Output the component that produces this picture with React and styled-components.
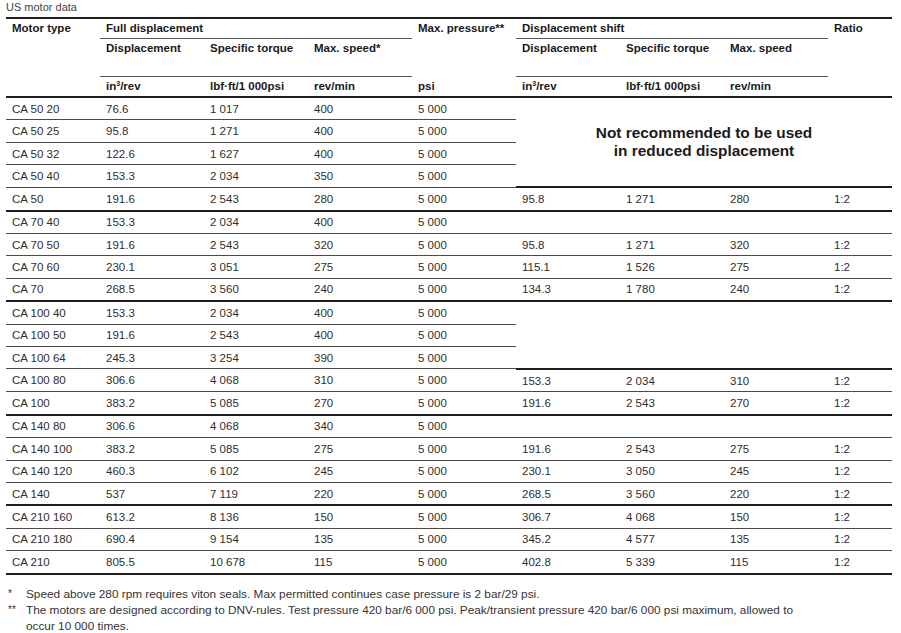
import styled, { createGlobalStyle } from "styled-components";

const GlobalStyle = createGlobalStyle`
  html, body {
    margin: 0;
    padding: 0;
    background: #fff;
  }
  body {
    font-family: "Liberation Sans", Arial, sans-serif;
    color: #2a2a2a;
  }
`;

const Page = styled.div`
  width: 901px;
  height: 633px;
  padding: 0 0 0 6px;
  box-sizing: border-box;
  overflow: hidden;
`;

const Title = styled.div`
  font-size: 11px;
  line-height: 14px;
  color: #444;
  margin-bottom: 3px;
`;

const Table = styled.table`
  width: 886px;
  border-collapse: collapse;
  table-layout: fixed;
  border-top: 2px solid #1e1e1e;
  border-bottom: 2px solid #1e1e1e;
`;

const HeadCell = styled.th`
  text-align: left;
  vertical-align: ${({ $mid }) => ($mid ? "middle" : "top")};
  padding: ${({ $mid }) => ($mid ? "0 6px" : "2px 6px 0")};
  height: ${({ $h }) => $h}px;
  box-sizing: border-box;
  font-size: 11.5px;
  line-height: 14px;
  font-weight: 700;
  color: #1a1a1a;
  white-space: nowrap;
  border-bottom: ${({ $line }) =>
    $line === "thick"
      ? "2px solid #1e1e1e"
      : $line === "thin"
      ? "1px solid #555"
      : "none"};

  sup {
    font-size: 7px;
    line-height: 0;
    vertical-align: 4px;
  }
`;

const Cell = styled.td`
  padding: 0 6px;
  height: 21.42px;
  font-size: 11.5px;
  line-height: 14px;
  color: #2e2e2e;
  white-space: nowrap;
  vertical-align: middle;
  border-bottom: ${({ $end }) =>
    $end ? "2px solid #1e1e1e" : "1px solid #4a4a4a"};
`;

const NoteCell = styled(Cell)`
  text-align: center;
  font-size: 15.4px;
  line-height: 18px;
  font-weight: 700;
  color: #1a1a1a;
  white-space: normal;
`;

const Footnotes = styled.div`
  margin-top: 11px;
  display: grid;
  grid-template-columns: 18px 775px;
  padding-left: 2px;
  font-size: 11.8px;
  line-height: 16px;
  color: #333;
`;

const Mark = styled.span`
  font-size: 10px;
`;

const rows = [
  ["CA 50 20", "76.6", "1 017", "400", "note"],
  ["CA 50 25", "95.8", "1 271", "400", "skip"],
  ["CA 50 32", "122.6", "1 627", "400", "skip"],
  ["CA 50 40", "153.3", "2 034", "350", "skip"],
  ["CA 50", "191.6", "2 543", "280", ["95.8", "1 271", "280", "1:2"], true],
  ["CA 70 40", "153.3", "2 034", "400", "blank"],
  ["CA 70 50", "191.6", "2 543", "320", ["95.8", "1 271", "320", "1:2"]],
  ["CA 70 60", "230.1", "3 051", "275", ["115.1", "1 526", "275", "1:2"]],
  ["CA 70", "268.5", "3 560", "240", ["134.3", "1 780", "240", "1:2"], true],
  ["CA 100 40", "153.3", "2 034", "400", "gap"],
  ["CA 100 50", "191.6", "2 543", "400", "skip"],
  ["CA 100 64", "245.3", "3 254", "390", "skip"],
  ["CA 100 80", "306.6", "4 068", "310", ["153.3", "2 034", "310", "1:2"]],
  ["CA 100", "383.2", "5 085", "270", ["191.6", "2 543", "270", "1:2"], true],
  ["CA 140 80", "306.6", "4 068", "340", "blank"],
  ["CA 140 100", "383.2", "5 085", "275", ["191.6", "2 543", "275", "1:2"]],
  ["CA 140 120", "460.3", "6 102", "245", ["230.1", "3 050", "245", "1:2"]],
  ["CA 140", "537", "7 119", "220", ["268.5", "3 560", "220", "1:2"], true],
  ["CA 210 160", "613.2", "8 136", "150", ["306.7", "4 068", "150", "1:2"]],
  ["CA 210 180", "690.4", "9 154", "135", ["345.2", "4 577", "135", "1:2"]],
  ["CA 210", "805.5", "10 678", "115", ["402.8", "5 339", "115", "1:2"], true],
];

function ShiftCells({ shift, end }) {
  if (shift === "skip") return null;
  if (shift === "note")
    return (
      <NoteCell colSpan={4} rowSpan={4} $end>
        Not recommended to be used
        <br />
        in reduced displacement
      </NoteCell>
    );
  if (shift === "gap") return <Cell colSpan={4} rowSpan={3} $end />;
  if (shift === "blank")
    return [0, 1, 2, 3].map((i) => <Cell key={i} $end={end} />);
  return shift.map((v, i) => (
    <Cell key={i} $end={end}>
      {v}
    </Cell>
  ));
}

export default function App() {
  return (
    <>
      <GlobalStyle />
      <Page>
        <Title>US motor data</Title>
        <Table>
          <colgroup>
            <col style={{ width: 94 }} />
            <col style={{ width: 104 }} />
            <col style={{ width: 104 }} />
            <col style={{ width: 104 }} />
            <col style={{ width: 104 }} />
            <col style={{ width: 104 }} />
            <col style={{ width: 104 }} />
            <col style={{ width: 104 }} />
            <col style={{ width: 64 }} />
          </colgroup>
          <thead>
            <tr>
              <HeadCell rowSpan={3} $line="thick">
                Motor type
              </HeadCell>
              <HeadCell colSpan={3} $h={20} $line="thin">
                Full displacement
              </HeadCell>
              <HeadCell rowSpan={2}>Max. pressure**</HeadCell>
              <HeadCell colSpan={3} $h={20} $line="thin">
                Displacement shift
              </HeadCell>
              <HeadCell rowSpan={3} $line="thick">
                Ratio
              </HeadCell>
            </tr>
            <tr>
              <HeadCell $h={38} $line="thin">Displacement</HeadCell>
              <HeadCell $h={38} $line="thin">Specific torque</HeadCell>
              <HeadCell $h={38} $line="thin">Max. speed*</HeadCell>
              <HeadCell $h={38} $line="thin">Displacement</HeadCell>
              <HeadCell $h={38} $line="thin">Specific torque</HeadCell>
              <HeadCell $h={38} $line="thin">Max. speed</HeadCell>
            </tr>
            <tr>
              <HeadCell $h={21} $mid $line="thick">
                in<sup>3</sup>/rev
              </HeadCell>
              <HeadCell $h={21} $mid $line="thick">lbf·ft/1 000psi</HeadCell>
              <HeadCell $h={21} $mid $line="thick">rev/min</HeadCell>
              <HeadCell $h={21} $mid $line="thick">psi</HeadCell>
              <HeadCell $h={21} $mid $line="thick">
                in<sup>3</sup>/rev
              </HeadCell>
              <HeadCell $h={21} $mid $line="thick">lbf·ft/1 000psi</HeadCell>
              <HeadCell $h={21} $mid $line="thick">rev/min</HeadCell>
            </tr>
          </thead>
          <tbody>
            {rows.map(([type, d, t, s, shift, end]) => (
              <tr key={type}>
                <Cell $end={end}>{type}</Cell>
                <Cell $end={end}>{d}</Cell>
                <Cell $end={end}>{t}</Cell>
                <Cell $end={end}>{s}</Cell>
                <Cell $end={end}>5 000</Cell>
                <ShiftCells shift={shift} end={end} />
              </tr>
            ))}
          </tbody>
        </Table>
        <Footnotes>
          <Mark>*</Mark>
          <span>
            Speed above 280 rpm requires viton seals. Max permitted continues
            case pressure is 2 bar/29 psi.
          </span>
          <Mark>**</Mark>
          <span>
            The motors are designed according to DNV-rules. Test pressure 420
            bar/6 000 psi. Peak/transient pressure 420 bar/6 000 psi maximum,
            allowed to occur 10 000 times.
          </span>
        </Footnotes>
      </Page>
    </>
  );
}
